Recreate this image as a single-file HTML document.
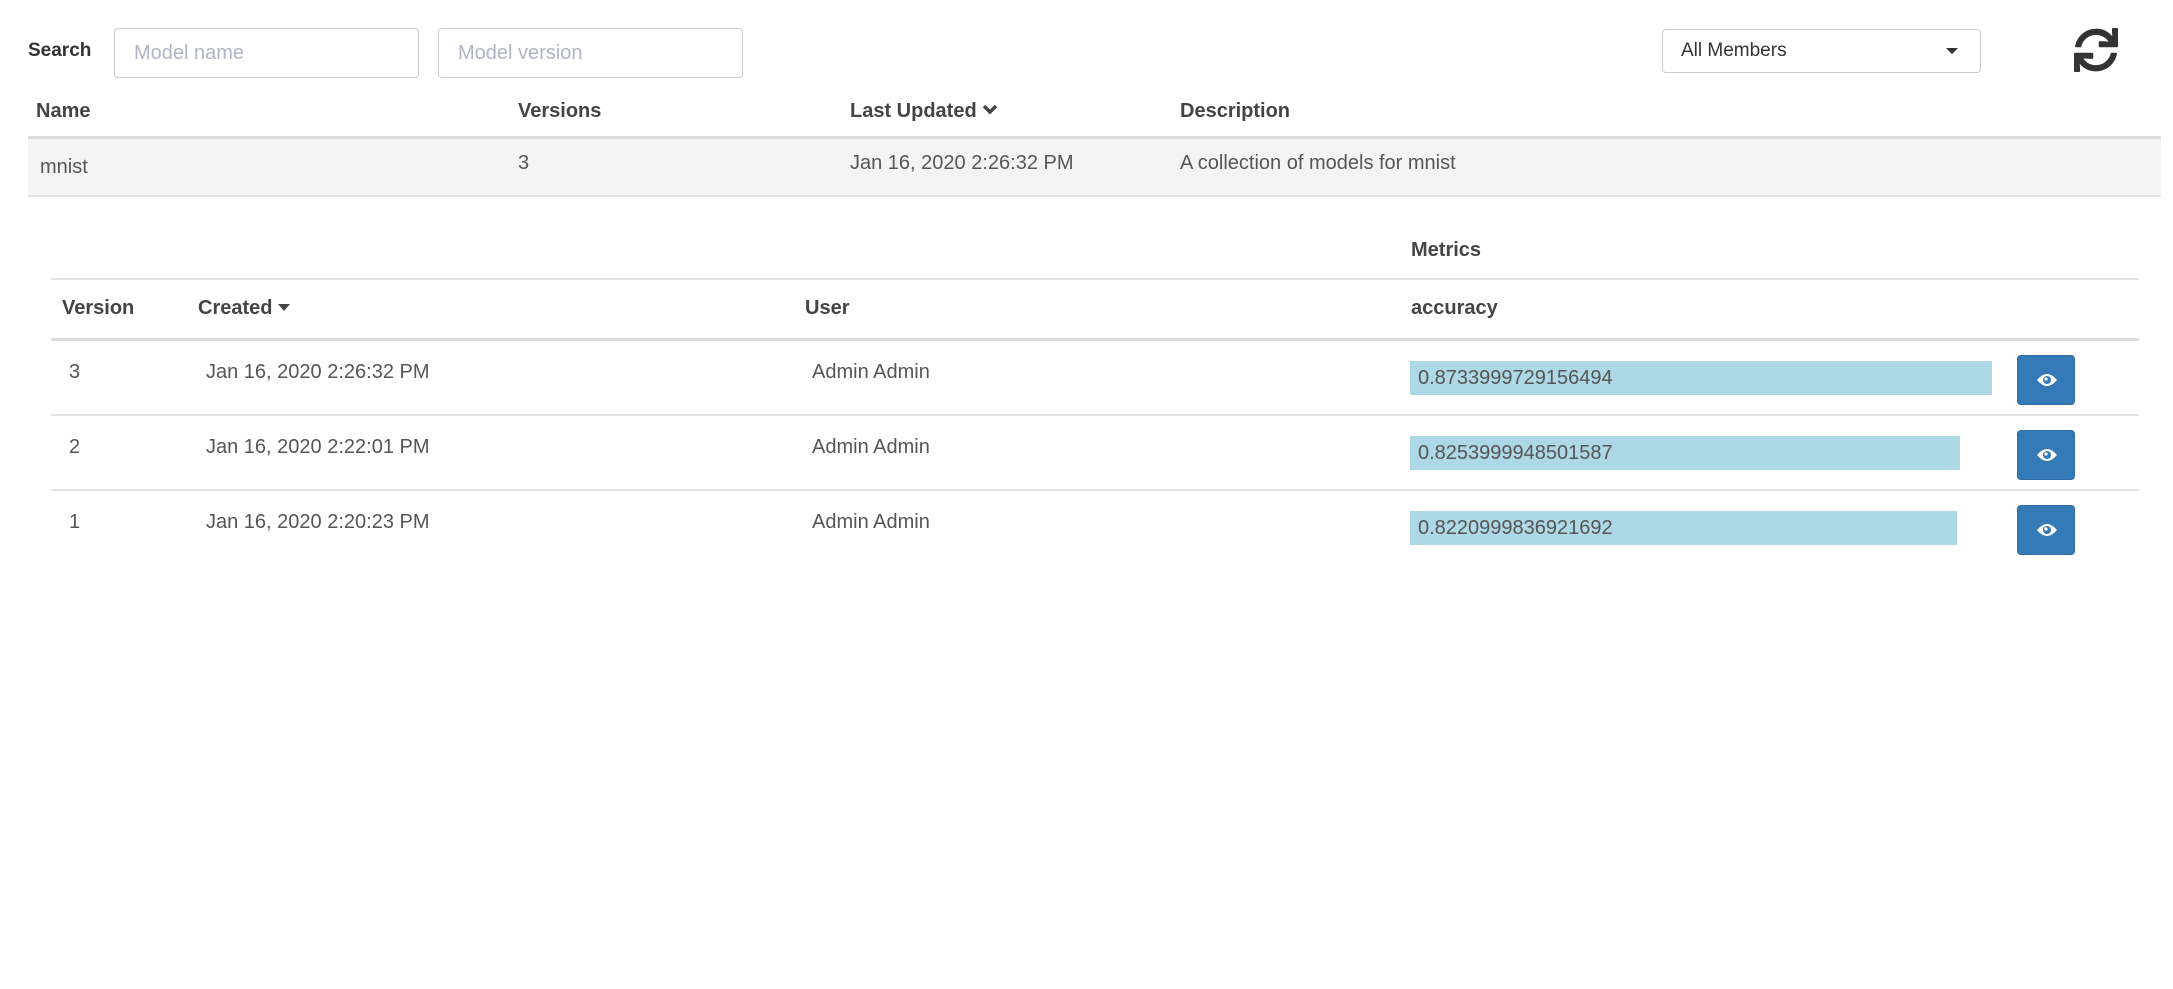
<!DOCTYPE html>
<html><head><meta charset="utf-8"><style>
*{box-sizing:border-box;margin:0;padding:0}
body{width:2173px;height:989px;background:#fff;font-family:"Liberation Sans",sans-serif;color:#555;position:relative;overflow:hidden}
.a{position:absolute;white-space:nowrap}
.b{font-weight:bold;color:#444}
.t{font-size:20px;line-height:24px}
.inp{position:absolute;border:1px solid #ccc;border-radius:4px;background:#fff;color:#b0b4c4;font-size:20px;padding-left:19px;line-height:48px}
.line{position:absolute;height:2px;background:#e2e2e2}
.bar{position:absolute;background:#add8e6;height:34px;font-size:20px;line-height:34px;padding-left:8px;color:#555}
.btn{position:absolute;width:58px;height:50px;background:#337ab7;border-radius:4px;border:1px solid #2e6da4}
.btn svg{position:absolute;left:18px;top:15px}
</style></head><body>
<div class="a b t" style="left:28px;top:39px;font-size:19px;color:#333">Search</div>
<div class="inp" style="left:114px;top:28px;width:305px;height:50px">Model name</div>
<div class="inp" style="left:438px;top:28px;width:305px;height:50px">Model version</div>
<div class="inp" style="left:1662px;top:29px;width:319px;height:44px;line-height:42px;color:#333;font-size:19px;padding-left:18px">All Members
<span style="position:absolute;right:22px;top:18px;width:0;height:0;border-left:6px solid transparent;border-right:6px solid transparent;border-top:6px solid #333"></span></div>
<svg class="a" style="left:2074px;top:28px" width="44" height="44" viewBox="0 0 512 512"><path fill="#333" d="M440.65 12.57l4 82.77A247.16 247.16 0 0 0 255.83 8C134.73 8 33.910 94.92 12.29 209.82A12 12 0 0 0 24.09 224h49.05a12 12 0 0 0 11.67-9.26 175.91 175.910 0 0 1 317-56.94l-101.46-4.86a12 12 0 0 0-12.57 12v47.41a12 12 0 0 0 12 12H500a12 12 0 0 0 12-12V12a12 12 0 0 0-12-12h-47.37a12 12 0 0 0-11.98 12.57zM255.83 432a175.61 175.61 0 0 1-146-77.8l101.8 4.87a12 12 0 0 0 12.57-12v-47.4a12 12 0 0 0-12-12H12a12 12 0 0 0-12 12V500a12 12 0 0 0 12 12h47.35a12 12 0 0 0 12-12.6l-4.15-82.57A247.17 247.17 0 0 0 255.83 504c121.11 0 221.93-86.92 243.55-201.82a12 12 0 0 0-11.8-14.18h-49.05a12 12 0 0 0-11.67 9.26A175.86 175.86 0 0 1 255.83 432z"/></svg>

<div class="a b t" style="left:36px;top:99px">Name</div>
<div class="a b t" style="left:518px;top:99px">Versions</div>
<div class="a b t" style="left:850px;top:99px">Last Updated <svg width="16" height="14" viewBox="0 0 16 14" style="vertical-align:0"><path d="M2 3l6 6 6-6" stroke="#444" stroke-width="3.5" fill="none"/></svg></div>
<div class="a b t" style="left:1180px;top:99px">Description</div>
<div class="line" style="left:28px;top:136px;width:2133px;height:3px;background:#ddd"></div>
<div class="a" style="left:28px;top:139px;width:2133px;height:58px;background:#f4f4f4;border-bottom:2px solid #e2e2e2"></div>
<div class="a t" style="left:40px;top:155px">mnist</div>
<div class="a t" style="left:518px;top:151px">3</div>
<div class="a t" style="left:850px;top:151px">Jan 16, 2020 2:26:32 PM</div>
<div class="a t" style="left:1180px;top:151px">A collection of models for mnist</div>

<div class="a b t" style="left:1411px;top:238px">Metrics</div>
<div class="line" style="left:51px;top:278px;width:2088px"></div>
<div class="a b t" style="left:62px;top:296px">Version</div>
<div class="a b t" style="left:198px;top:296px">Created <span style="display:inline-block;width:0;height:0;border-left:6px solid transparent;border-right:6px solid transparent;border-top:7px solid #444;vertical-align:3px"></span></div>
<div class="a b t" style="left:805px;top:296px">User</div>
<div class="a b t" style="left:1411px;top:296px">accuracy</div>
<div class="line" style="left:51px;top:338px;width:2088px;height:3px;background:#ddd"></div>

<div class="a t" style="left:69px;top:360px">3</div>
<div class="a t" style="left:206px;top:360px">Jan 16, 2020 2:26:32 PM</div>
<div class="a t" style="left:812px;top:360px">Admin Admin</div>
<div class="bar" style="left:1410px;top:361px;width:582px">0.8733999729156494</div>
<div class="btn" style="left:2017px;top:355px"><svg width="22" height="18" viewBox="0 0 22 18"><path d="M1 9Q11-3 21 9Q11 21 1 9Z" fill="#fff"/><circle cx="11" cy="9" r="4" fill="#337ab7"/><circle cx="10" cy="8" r="1.6" fill="#fff"/></svg></div>
<div class="line" style="left:51px;top:414px;width:2088px"></div>

<div class="a t" style="left:69px;top:435px">2</div>
<div class="a t" style="left:206px;top:435px">Jan 16, 2020 2:22:01 PM</div>
<div class="a t" style="left:812px;top:435px">Admin Admin</div>
<div class="bar" style="left:1410px;top:436px;width:550px">0.8253999948501587</div>
<div class="btn" style="left:2017px;top:430px"><svg width="22" height="18" viewBox="0 0 22 18"><path d="M1 9Q11-3 21 9Q11 21 1 9Z" fill="#fff"/><circle cx="11" cy="9" r="4" fill="#337ab7"/><circle cx="10" cy="8" r="1.6" fill="#fff"/></svg></div>
<div class="line" style="left:51px;top:489px;width:2088px"></div>

<div class="a t" style="left:69px;top:510px">1</div>
<div class="a t" style="left:206px;top:510px">Jan 16, 2020 2:20:23 PM</div>
<div class="a t" style="left:812px;top:510px">Admin Admin</div>
<div class="bar" style="left:1410px;top:511px;width:547px">0.8220999836921692</div>
<div class="btn" style="left:2017px;top:505px"><svg width="22" height="18" viewBox="0 0 22 18"><path d="M1 9Q11-3 21 9Q11 21 1 9Z" fill="#fff"/><circle cx="11" cy="9" r="4" fill="#337ab7"/><circle cx="10" cy="8" r="1.6" fill="#fff"/></svg></div>
</body></html>
